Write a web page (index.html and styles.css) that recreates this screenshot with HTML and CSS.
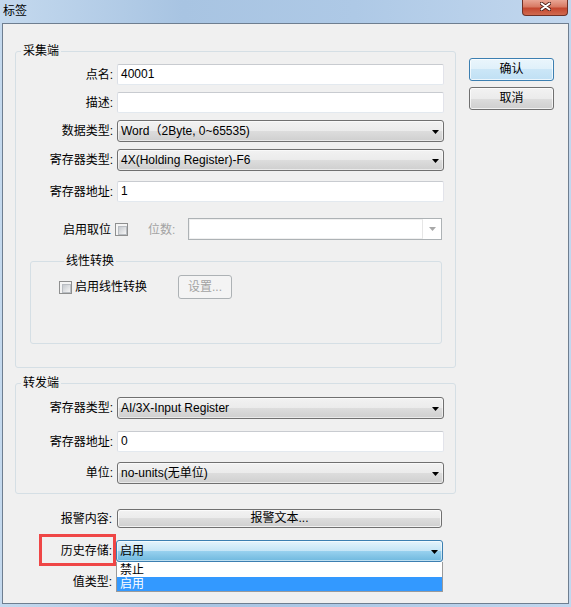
FILE: index.html
```html
<!DOCTYPE html>
<html lang="zh-CN">
<head>
    <meta charset="UTF-8">
    <meta name="viewport" content="width=device-width, initial-scale=1.0">
    <title>标签</title>
    <link rel="stylesheet" href="styles.css">
</head>
<body>
    <div class="window">
        <div class="titlebar">
            <span class="title">标签</span>
            <div class="close-btn">
                <svg width="11" height="9" viewBox="0 0 11 9">
                    <path d="M1.5 1.5 L9.5 7.5 M9.5 1.5 L1.5 7.5" stroke="#4b1d16" stroke-width="3.6" stroke-linecap="round"/>
                    <path d="M1.5 1.5 L9.5 7.5 M9.5 1.5 L1.5 7.5" stroke="#fff" stroke-width="2" stroke-linecap="round"/>
                </svg>
            </div>
        </div>
        <div class="client">
            <div class="main">
                <fieldset class="group group-collect">
                    <legend>采集端</legend>
                    <div class="row"><span class="lbl">点名:</span><div class="edit">40001</div></div>
                    <div class="row"><span class="lbl">描述:</span><div class="edit"></div></div>
                    <div class="row"><span class="lbl">数据类型:</span><div class="combo">Word（2Byte, 0~65535)</div></div>
                    <div class="row"><span class="lbl">寄存器类型:</span><div class="combo">4X(Holding Register)-F6</div></div>
                    <div class="row row-addr"><span class="lbl">寄存器地址:</span><div class="edit">1</div></div>
                    <div class="row row-bits">
                        <span class="lbl lbl-check">启用取位</span>
                        <span class="check"></span>
                        <span class="dim-lbl">位数:</span>
                        <div class="combo-off">
                            <div class="combo-off-field"></div>
                            <div class="combo-off-drop"></div>
                        </div>
                    </div>
                    <fieldset class="group group-linear">
                        <legend>线性转换</legend>
                        <div class="row">
                            <span class="check"></span>
                            <span class="check-text">启用线性转换</span>
                            <div class="btn btn-off btn-setup">设置...</div>
                        </div>
                    </fieldset>
                </fieldset>

                <fieldset class="group group-forward">
                    <legend>转发端</legend>
                    <div class="row"><span class="lbl">寄存器类型:</span><div class="combo">AI/3X-Input Register</div></div>
                    <div class="row row-fwd-addr"><span class="lbl">寄存器地址:</span><div class="edit">0</div></div>
                    <div class="row row-unit"><span class="lbl">单位:</span><div class="combo">no-units(无单位)</div></div>
                </fieldset>

                <div class="extra">
                    <div class="row"><span class="lbl">报警内容:</span><div class="btn btn-alarm">报警文本...</div></div>
                    <div class="row row-history">
                        <span class="lbl">历史存储:</span>
                        <div class="combo-wrap">
                            <div class="combo combo-focus">启用</div>
                            <ul class="droplist">
                                <li>禁止</li>
                                <li class="selected">启用</li>
                            </ul>
                        </div>
                        <div class="mark"></div>
                    </div>
                    <div class="row row-value"><span class="lbl">值类型:</span><div class="combo"></div></div>
                </div>
            </div>
            <div class="side">
                <div class="btn btn-default">确认</div>
                <div class="btn">取消</div>
            </div>
        </div>
    </div>
</body>
</html>
```

FILE: styles.css
```css
* { box-sizing: border-box; }
body { margin: 0; font-family: "Liberation Sans", "Noto Sans CJK SC", sans-serif; font-size: 12px; color: #000; background: #bcd4ec; }

.window {
    width: 571px;
    height: 607px;
    display: flex;
    flex-direction: column;
    background: linear-gradient(90deg, #c4d9ee 0%, #a8c4e2 32%, #aec9e6 62%, #c2d7ee 100%);
}
.titlebar { height: 23px; flex: none; display: flex; align-items: flex-start; }
.title { margin: 4px 0 0 3px; line-height: 14px; }
.close-btn {
    margin-left: auto;
    margin-right: 3px;
    width: 46px;
    height: 16px;
    padding-top: 2px;
    display: flex;
    justify-content: center;
    align-items: flex-start;
    border: 1px solid #6e3127;
    border-top: none;
    border-radius: 0 0 4px 4px;
    background: linear-gradient(#e9a594, #d87a64 45%, #c4472f 55%, #d06a4f 100%);
}

.client {
    flex: 1;
    margin: 0 2px 3px 2px;
    border: 1px solid #6e7e90;
    background: #f0f0f0;
    display: flex;
    align-items: flex-start;
    padding: 20px 0 0 12px;
}
.main { width: 441px; flex: none; }
.side { width: 85px; margin-left: 13px; padding-top: 14px; display: flex; flex-direction: column; gap: 6px; }

/* group boxes */
.group { margin: 0; padding: 0; min-width: 0; border: 1px solid #d5dfe5; border-radius: 3px; }
.group legend { margin-left: 5px; padding: 0 2px; line-height: 14px; }
.group-collect { padding: 6px 0 23px; }
.group-linear { margin: 14px 13px 0 14px; padding: 7px 0 44px 28px; }
.group-forward { margin-top: 8px; padding: 7px 0 9px; }

/* rows */
.row { display: flex; align-items: center; }
.row + .row { margin-top: 7px; }
.row.row-addr { margin-top: 10px; }
.row.row-bits { margin-top: 16px; }
.row.row-bits .lbl, .row.row-bits .dim-lbl { padding-top: 1px; }
.row.row-fwd-addr { margin-top: 12px; }
.row.row-unit { margin-top: 10px; }
.extra { margin-top: 15px; }
.extra .row + .row { margin-top: 12px; }
.extra .row.row-value { margin-top: 7px; }
.row-value .lbl { padding-top: 3px; }
.lbl { width: 97px; flex: none; margin-right: 4px; text-align: right; line-height: 14px; }
.lbl-check { width: 95px; }

.edit {
    width: 327px;
    height: 21px;
    padding-left: 3px;
    line-height: 19px;
    background: #fff;
    border: 1px solid;
    border-color: #c8cbd0 #e2e3ea #e3e9ef #dbdfe6;
    border-radius: 2px;
}
.combo {
    position: relative;
    width: 327px;
    height: 22px;
    padding-left: 3px;
    line-height: 20px;
    border: 1px solid #707070;
    border-radius: 3px;
    background: linear-gradient(#f2f2f2 0%, #ebebeb 50%, #dddddd 50%, #cfcfcf 100%);
    box-shadow: inset 0 0 0 1px rgba(255, 255, 255, 0.55);
}
.combo::after {
    content: "";
    position: absolute;
    right: 4px;
    top: 9px;
    width: 7px;
    height: 4px;
    background: #000;
    clip-path: polygon(0 0, 100% 0, 50% 100%);
}
.combo-focus {
    border-color: #3c7fb1;
    background: linear-gradient(#e5f4fc 0%, #c4e5f6 50%, #98d1ef 50%, #6fb8de 100%);
}

/* checkbox */
.check {
    width: 13px;
    height: 13px;
    flex: none;
    border: 1px solid #8e8f8f;
    padding: 2px;
    background: #f4f4f4;
}
.check::before {
    content: "";
    display: block;
    width: 7px;
    height: 7px;
    background: linear-gradient(135deg, #c6cacf, #f5f5f5);
    border: 1px solid #b9bdc2;
}
.check-text { margin-left: 3px; line-height: 14px; }
.dim-lbl { width: 40px; margin-left: 20px; color: #a3a3a3; line-height: 14px; }

.combo-off {
    width: 254px;
    height: 22px;
    display: flex;
    border: 1px solid #adb2b5;
    background: #fff;
}
.combo-off-field { flex: 1; border: 1px solid #f0f0f0; border-right-color: #e6e6e6; }
.combo-off-drop { width: 18px; position: relative; }
.combo-off-drop::after {
    content: "";
    position: absolute;
    left: 6px;
    top: 8px;
    width: 7px;
    height: 4px;
    background: #a8a8a8;
    clip-path: polygon(0 0, 100% 0, 50% 100%);
}

/* buttons */
.btn {
    height: 23px;
    line-height: 21px;
    text-align: center;
    border: 1px solid #707070;
    border-radius: 3px;
    background: linear-gradient(#f2f2f2 0%, #ebebeb 50%, #dddddd 50%, #cfcfcf 100%);
    box-shadow: inset 0 0 0 1px rgba(255, 255, 255, 0.7);
}
.btn-default {
    border-color: #3c7fb1;
    background: linear-gradient(#eaf5fc 0%, #dff0fa 50%, #cbe6f7 50%, #c0e0f4 100%);
}
.btn-off { border-color: #adb2b5; background: #f4f4f4; color: #a3a3a3; box-shadow: none; }
.btn-setup { width: 54px; height: 24px; margin-left: 31px; line-height: 22px; }
.btn-alarm { width: 325px; height: 19px; margin-left: 1px; line-height: 17px; }

/* opened drop-down of 历史存储 */
.combo-wrap { position: relative; }
.droplist {
    position: absolute;
    z-index: 2;
    top: 22px;
    left: 0;
    width: 327px;
    margin: 0;
    padding: 1px 0 0;
    list-style: none;
    background: #fff;
    border: 1px solid #9a9a9a;
    border-top: none;
}
.droplist li { height: 14px; line-height: 14px; padding-left: 3px; }
.droplist li.selected { background: #3399ff; color: #fff; }

.row-history { position: relative; }
.mark {
    position: absolute;
    left: 24px;
    top: -6px;
    width: 77px;
    height: 32px;
    border: 3px solid #ef4646;
}
```
